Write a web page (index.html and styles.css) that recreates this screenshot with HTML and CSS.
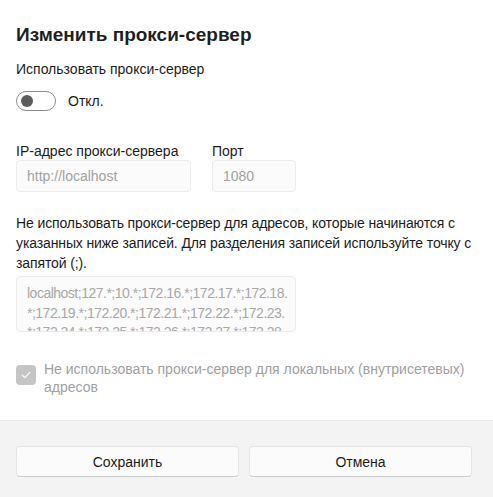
FILE: index.html
```html
<!DOCTYPE html>
<html lang="ru">
<head>
<meta charset="utf-8">
<title>Изменить прокси-сервер</title>
<link rel="stylesheet" href="styles.css">
</head>
<body>
<div class="dialog">
  <div class="content">
    <h1 class="title">Изменить прокси-сервер</h1>
    <div class="label">Использовать прокси-сервер</div>
    <div class="toggle-row">
      <span class="toggle"><span class="knob"></span></span>
      <span class="toggle-text">Откл.</span>
    </div>
    <div class="fields">
      <div class="field">
        <div class="field-label">IP-адрес прокси-сервера</div>
        <div class="input input-ip">http://localhost</div>
      </div>
      <div class="field">
        <div class="field-label">Порт</div>
        <div class="input input-port">1080</div>
      </div>
    </div>
    <p class="desc">Не использовать прокси-сервер для адресов, которые начинаются с указанных ниже записей. Для разделения записей используйте точку с запятой (;).</p>
    <div class="textarea">
      <div class="ta-line">localhost;127.*;10.*;172.16.*;172.17.*;172.18.</div>
      <div class="ta-line">*;172.19.*;172.20.*;172.21.*;172.22.*;172.23.</div>
      <div class="ta-line">*;172.24.*;172.25.*;172.26.*;172.27.*;172.28.</div>
    </div>
    <div class="check-row">
      <span class="checkbox">
        <svg width="12" height="12" viewBox="0 0 12 12"><path d="M2.2 6.2 L4.8 8.7 L9.8 3.4" fill="none" stroke="#ffffff" stroke-width="1.1" stroke-linecap="round" stroke-linejoin="round"/></svg>
      </span>
      <span class="check-text">Не использовать прокси-сервер для локальных (внутрисетевых) адресов</span>
    </div>
  </div>
  <div class="footer">
    <button class="btn">Сохранить</button>
    <button class="btn">Отмена</button>
  </div>
</div>
</body>
</html>
```

FILE: styles.css
```css
html, body {
  margin: 0;
  padding: 0;
  background: #ffffff;
}
body {
  font-family: "Liberation Sans", Arial, sans-serif;
  color: #1b1b1b;
  font-size: 14px;
}
.dialog {
  width: 493px;
  height: 497px;
  display: flex;
  flex-direction: column;
  overflow: hidden;
}
.content {
  padding: 21px 16px 0 16px;
  flex: 1;
}
.title {
  margin: 0;
  font-size: 19px;
  line-height: 28px;
  font-weight: 700;
  color: #1f1f1f;
}
.label {
  margin-top: 10px;
  line-height: 20px;
}
.toggle-row {
  margin-top: 12px;
  display: flex;
  align-items: center;
  height: 20px;
}
.toggle {
  width: 38px;
  height: 18px;
  border: 1px solid #8b8b8b;
  border-radius: 10px;
  display: flex;
  align-items: center;
  box-sizing: content-box;
}
.knob {
  width: 12px;
  height: 12px;
  border-radius: 50%;
  background: #5c5c5c;
  margin-left: 4px;
}
.toggle-text {
  margin-left: 12px;
}
.fields {
  margin-top: 31px;
  display: flex;
  gap: 21px;
}
.field-label {
  line-height: 18px;
}
.input {
  box-sizing: border-box;
  height: 32px;
  border: 1px solid #ebebeb;
  border-radius: 4px;
  background: #fbfbfb;
  color: #a2a2a2;
  padding: 0 10px;
  line-height: 30px;
}
.input-ip {
  width: 175px;
}
.input-port {
  width: 84px;
}
.desc {
  margin: 21px 0 0 0;
  line-height: 20px;
  width: 466px;
  letter-spacing: -0.12px;
}
.textarea {
  box-sizing: border-box;
  margin-top: 3px;
  width: 280px;
  height: 56px;
  border: 1px solid #ebebeb;
  border-radius: 4px;
  background: #fbfbfb;
  color: #a8a8a8;
  padding: 7px 10px 0 10px;
  line-height: 19.5px;
  letter-spacing: -0.5px;
  overflow: hidden;
}
.ta-line {
  white-space: nowrap;
}
.check-row {
  margin-top: 32px;
  display: flex;
  align-items: flex-start;
}
.checkbox {
  flex: none;
  width: 20px;
  height: 20px;
  border-radius: 4px;
  background: #c5c5c5;
  display: flex;
  align-items: center;
  justify-content: center;
  margin-top: 1px;
}
.check-text {
  margin-left: 8px;
  color: #a0a0a0;
  line-height: 18px;
  margin-top: -4px;
}
.footer {
  background: #f3f3f3;
  border-top: 1px solid #e5e5e5;
  height: 77px;
  box-sizing: border-box;
  padding: 25px 21px 0 16px;
  display: flex;
  gap: 10px;
  align-items: flex-start;
}
.btn {
  flex: 1;
  height: 31px;
  border: 1px solid #e5e5e5;
  border-bottom-color: #cccccc;
  border-radius: 4px;
  background: #fbfbfb;
  font-family: inherit;
  font-size: 14px;
  color: #1b1b1b;
  padding: 0;
}
```
